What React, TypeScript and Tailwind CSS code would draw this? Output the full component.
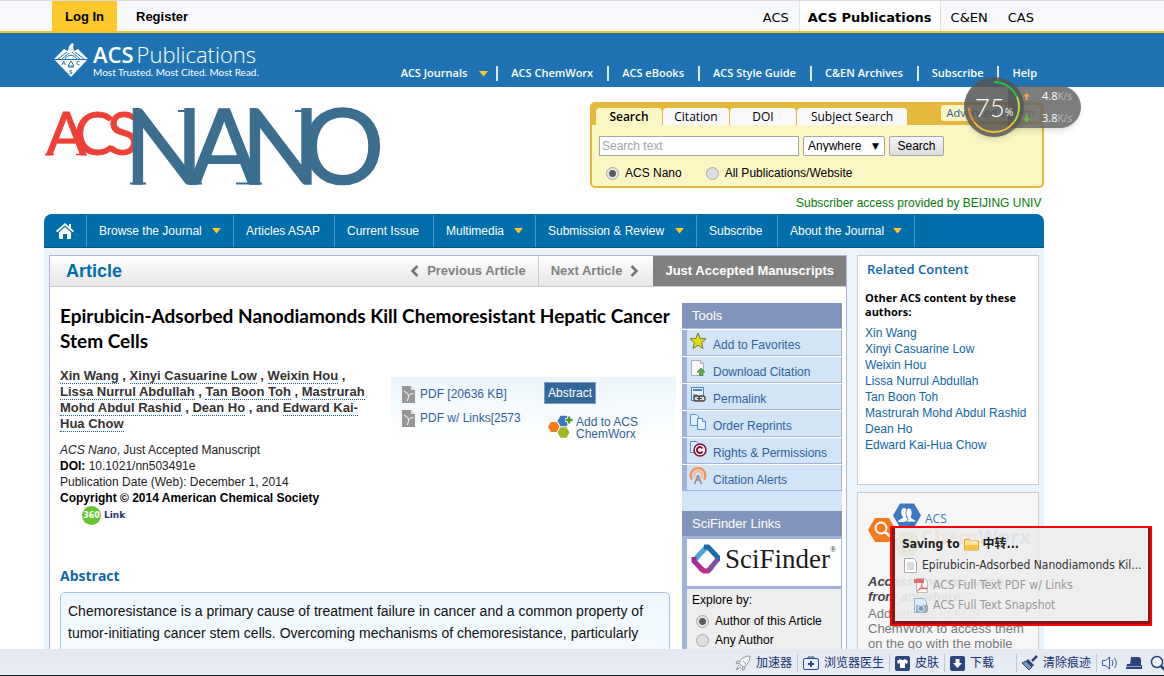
import React from "react";

const hex = (cx: number, cy: number, r: number) => {
  const h = r * 0.866;
  return `${cx - r},${cy} ${cx - r / 2},${cy - h} ${cx + r / 2},${cy - h} ${cx + r},${cy} ${cx + r / 2},${cy + h} ${cx - r / 2},${cy + h}`;
};

const Caret = ({ className = "" }: { className?: string }) => (
  <svg className={className} width="9" height="6" viewBox="0 0 9 6" aria-hidden="true">
    <path d="M0 0h9L4.5 5.5z" fill="#fdc82f" />
  </svg>
);

function TopBar() {
  return (
    <div className="h-[33px] shrink-0 border-t border-b-2 border-t-[#d9dbde] border-b-[#f5c32c] bg-[#f8f9fc] pl-13">
      <div className="flex h-full max-w-[992px] items-stretch text-[13px] text-black">
        <a href="#login" className="flex items-center bg-[#fec72b] px-[13px] pt-1 pb-0.5 font-bold">Log In</a>
        <a href="#register" className="flex items-center px-[19px] pt-1 pb-0.5 font-bold">Register</a>
        <nav className="ml-auto flex items-stretch font-['DejaVu_Sans',sans-serif]">
          <a href="#acs" className="flex items-center px-2.5 pt-1">ACS</a>
          <a href="#pubs" className="flex items-center border-x border-[#dfe1e5] bg-white px-2 pt-1 font-bold">ACS Publications</a>
          <a href="#cen" className="flex items-center px-2.5 pt-1">C&amp;EN</a>
          <a href="#cas" className="flex items-center px-2.5 pt-1">CAS</a>
        </nav>
      </div>
    </div>
  );
}

function AcsEmblem() {
  return (
    <svg width="36" height="36" viewBox="0 0 36 36" className="shrink-0" aria-hidden="true">
      <path d="M1 17 11 7l4 2 1-5 3-3 2 1-1 3 1 4 4-2 10 10-17 18z" fill="#fff" />
      <path d="M5 17 14 10M9 17l7-6M27 17l-8-7M31 17l-9-7M1 17.5h34M12 17c3-5 9-5 12 0" stroke="#1f73b3" strokeWidth="1" fill="none" />
      <path d="m18 19-3 5h6zM15 25h6" stroke="#1f73b3" strokeWidth="1" fill="none" />
      <text x="8.5" y="23" fontSize="6" fontWeight="700" fill="#1f73b3">A</text>
      <text x="23" y="23" fontSize="6" fontWeight="700" fill="#1f73b3">C</text>
      <text x="16" y="32" fontSize="6" fontWeight="700" fill="#1f73b3">S</text>
    </svg>
  );
}

const headerLinks = ["ACS Journals", "ACS ChemWorx", "ACS eBooks", "ACS Style Guide", "C&EN Archives", "Subscribe", "Help"];

function Header() {
  return (
    <header className="h-[54px] shrink-0 bg-[#1f73b3] pl-[53px] text-white">
      <div className="flex h-full max-w-[984px] justify-between font-['Open_Sans',sans-serif]">
        <a href="#home" className="flex items-start gap-1 pt-[9px]">
          <AcsEmblem />
          <span className="block">
            <span className="block text-[22px] leading-[24px]"><span className="font-semibold">ACS</span><span className="ml-[3px] font-light">Publications</span></span>
            <span className="block font-['Lato',sans-serif] text-[10px] leading-[12px]">Most Trusted. Most Cited. Most Read.</span>
          </span>
        </a>
        <nav className="flex items-end pb-1.5 text-[11px] font-semibold">
          {headerLinks.map((l, i) => (
            <span key={l} className="flex h-[15px] items-center">
              {i > 0 && <span className="mr-[13px] ml-3.5 h-[15px] w-0.5 bg-white/85" />}
              <a href="#nav">{l}</a>
              {i === 0 && <Caret className="ml-3 -mr-1.5" />}
            </span>
          ))}
        </nav>
      </div>
    </header>
  );
}

function NanoLogo() {
  return (
    <svg width="340" height="84" viewBox="0 0 340 84" role="img" aria-label="ACS Nano" fontFamily="Lato, sans-serif">
      <text x="2 30 63" y="49" fontSize="60" fill="#ee4036" stroke="#ee4036" strokeWidth=".8">ACS</text>
      <text x="80 145 197 257" y="78" fontSize="104" fill="#3b6e8f" stroke="#3b6e8f" strokeWidth="1.500">NANO</text>
      <path d="M134 5h16M86 77.500h16M251 5h15M145 77.500h13M192 77.500h26" stroke="#3b6e8f" strokeWidth="2" />
      <path d="M1 48.500h9M32 48.500h10" stroke="#ee4036" strokeWidth="1.500" />
    </svg>
  );
}

const radioCls =
  "size-[13px] shrink-0 appearance-none rounded-full border border-[#a9a9a9] bg-[#dedede] checked:bg-[radial-gradient(circle,#5a5a5a_0,#5a5a5a_3px,#e6e6e6_4px)]";

function SearchPanel() {
  const tab = "flex h-[17px] items-center justify-center rounded-t-[4px] bg-[#f9f9f9]";
  return (
    <form className="w-[454px] rounded-[5px] border-2 border-[#e5b93d] bg-[#fbf7c4]" onSubmit={(e) => e.preventDefault()}>
      <div className="flex h-[21px] items-end gap-px bg-[#e5b93d] pl-1 font-['Open_Sans',sans-serif] text-[12px] text-black">
        <button type="button" className="flex h-[17px] w-[66px] items-center justify-center rounded-t-[4px] bg-[#fbf7c4] font-semibold">Search</button>
        <button type="button" className={`${tab} w-[66px]`}>Citation</button>
        <button type="button" className={`${tab} w-[66px]`}>DOI</button>
        <button type="button" className={`${tab} w-[110px]`}>Subject Search</button>
        <a href="#adv" className="mr-0.5 mb-1 ml-auto flex h-4 w-[99px] items-center justify-center rounded-[3px] bg-[#fbf7c4] text-[11px] text-[#2c5d94]">Advanced Search</a>
      </div>
      <div className="flex gap-1 px-[7px] pt-[11px] text-[12px]">
        <input type="text" aria-label="Search text" placeholder="Search text" className="h-5 w-[200px] border border-[#a5a5a5] bg-white px-0.5 placeholder:text-[#a5a5a5]" />
        <span className="relative">
          <select aria-label="Search in" className="h-5 w-[82px] appearance-none rounded-[2px] border border-[#a5a5a5] bg-white px-1 leading-none">
            <option>Anywhere</option>
          </select>
          <span className="pointer-events-none absolute top-1 right-1.5 font-['DejaVu_Sans',sans-serif] text-[9px] leading-[12px]">▼</span>
        </span>
        <button className="h-5 w-[55px] rounded-[2px] border border-[#a5a5a5] bg-linear-to-b from-[#f5f5f5] to-[#dcdcdc]">Search</button>
      </div>
      <div className="flex items-center px-3.5 pt-[9px] pb-[5px] text-[12px] leading-[16px]">
        <label className="flex items-center gap-1.5"><input type="radio" name="scope" defaultChecked className={radioCls} />ACS Nano</label>
        <label className="ml-6 flex items-center gap-1.5"><input type="radio" name="scope" className={radioCls} />All Publications/Website</label>
      </div>
    </form>
  );
}

function MainNav() {
  const item = "flex items-center border-r border-[#4398c6] pl-3";
  return (
    <nav className="flex h-[34px] items-stretch rounded-t-[8px] border-b border-[#045585] bg-[#006eab] pt-px text-[12px] text-white">
      <a href="#home" aria-label="Home" className="flex w-[43px] items-center justify-center border-r border-[#4398c6]">
        <svg width="18" height="16" viewBox="0 0 18 16" fill="#fff" aria-hidden="true">
          <path d="M9 0 0 8l1.200 1.200L9 2.500l7.800 6.700L18 8l-3-2.700V1h-2v2.500z" />
          <path d="M9 4 3 9.200V15q0 1 1 1h3v-5h4v5h3q1 0 1-1V9.200z" />
        </svg>
      </a>
      <a href="#b" className={`${item} w-[147px]`}>Browse the Journal<Caret className="ml-auto mr-3" /></a>
      <a href="#a" className={`${item} w-[101px]`}>Articles ASAP</a>
      <a href="#c" className={`${item} w-[99px]`}>Current Issue</a>
      <a href="#m" className={`${item} w-[102px]`}>Multimedia<Caret className="ml-auto mr-3" /></a>
      <a href="#s" className={`${item} w-[161px]`}>Submission &amp; Review<Caret className="ml-auto mr-3" /></a>
      <a href="#u" className={`${item} w-[81px]`}>Subscribe</a>
      <a href="#j" className={`${item} w-[137px]`}>About the Journal<Caret className="ml-auto mr-3" /></a>
    </nav>
  );
}

const Chevron = ({ right = false }: { right?: boolean }) => (
  <svg width="9" height="12" viewBox="0 0 9 12" fill="none" stroke="#747474" strokeWidth="2.500" aria-hidden="true">
    <path d={right ? "M1.500 1 6.500 6l-5 5" : "M7.500 1 2.500 6l5 5"} />
  </svg>
);

const PdfIcon = () => (
  <svg width="13" height="17" viewBox="0 0 13 17" aria-hidden="true">
    <path d="M0 0h9l4 4v13H0z" fill="#979797" />
    <path d="M9 0v4h4z" fill="#e6e6e6" />
    <path d="M2 5.500C5 6 6 8 6.500 9.500 8 8 10 7.500 11.500 7.500M6.500 9.500C6.500 12 6 14 5 15" stroke="#fff" fill="none" />
  </svg>
);

const ChemIcon = () => (
  <svg width="25" height="24" viewBox="0 0 25 24" className="shrink-0" aria-hidden="true">
    <polygon points={hex(5.8, 12, 5.8)} fill="#f47b20" />
    <polygon points={hex(15.500, 6, 6)} fill="#3b78c3" />
    <polygon points={hex(15.500, 17.500, 6)} fill="#9fb52a" />
    <path d="M21 1v8M17 5h8" stroke="#fff" strokeWidth="4" />
    <path d="M21 1.500v7M17.500 5h7" stroke="#4c9a2a" strokeWidth="2.500" />
  </svg>
);

const toolIcons = [
  <svg key="0" width="18" height="18" viewBox="0 0 18 18"><path d="m9 1 2.200 5.500 5.800.3-4.500 3.800L14 16.500 9 13.200 4 16.500l1.500-5.900L1 6.800l5.800-.3z" fill="#e3dc10" stroke="#77753c" /></svg>,
  <svg key="1" width="18" height="18" viewBox="0 0 18 18"><path d="M2.500 1.500h9l3 3v12h-12z" fill="#fafafa" stroke="#a9aeb2" /><path d="M11.500 1.500v3h3" fill="none" stroke="#a9aeb2" /><path d="m12 9 4 4h-2.500v3.500h-3V13H8z" fill="#4fae49" stroke="#2f7d2e" strokeWidth=".6" /></svg>,
  <svg key="2" width="18" height="18" viewBox="0 0 18 18"><path d="M2.500 1.500h12v13h-12z" fill="#eaf3ff" stroke="#4a82c4" /><path d="M4 4h9" stroke="#4a82c4" strokeWidth="2" /><path d="M4 8h4v4H4z" fill="#6e9fd8" /><rect x="5" y="10" width="6" height="5" rx="2" fill="#ddd" stroke="#444" strokeWidth="1.300" /><rect x="10" y="10" width="6" height="5" rx="2" fill="#ddd" stroke="#444" strokeWidth="1.300" /><path d="M8 12.500h5" stroke="#444" /></svg>,
  <svg key="3" width="18" height="18" viewBox="0 0 18 18" fill="#e3effc" stroke="#5a8fd0"><path d="M1.500 1.500h6l2 2v9h-8z" /><path d="M8.500 5.500h5l3 3v8h-8z" /><path d="M13.500 5.500v3h3" /></svg>,
  <svg key="4" width="18" height="18" viewBox="0 0 18 18" fill="#e3effc" stroke="#5a8fd0"><path d="M1.500 1.500h6l2 2v9h-8z" /><circle cx="11" cy="10" r="6" fill="#f7eef0" stroke="#7b1230" strokeWidth="1.500" /><path d="M13.500 8.500a3 3 0 1 0 0 3" fill="none" stroke="#7b1230" strokeWidth="1.800" /></svg>,
  <svg key="5" width="18" height="18" viewBox="0 0 18 18" fill="none"><path d="M3 12.500a7.300 7.300 0 1 1 12 0" stroke="#f4935a" strokeWidth="2.500" /><path d="M6 10.500a3.800 3.800 0 1 1 6 0" stroke="#f7b48c" strokeWidth="1.800" /><path d="m9 8-3.500 9M9 8l3.500 9M7 13h4" stroke="#8d8d8d" strokeWidth="1.400" /></svg>,
];
const toolNames = ["Add to Favorites", "Download Citation", "Permalink", "Order Reprints", "Rights & Permissions", "Citation Alerts"];

function ToolsColumn() {
  return (
    <aside className="w-40 shrink-0 self-stretch bg-[#d1e5f6]">
      <h2 className="h-[26px] border-b border-[#a9b8de] bg-[#8194b9] pl-2.5 text-[13px] leading-[25px] text-white">Tools</h2>
      <ul>
        {toolNames.map((n, i) => (
          <li key={n} className="border-t border-white">
            <a href="#tool" className="flex h-[26px] items-center gap-1.5 border-r border-b border-l-5 border-[#a3b2dc] pl-0.5 text-[12px] text-[#33619c]">
              <span className="-mt-1">{toolIcons[i]}</span>
              <span className="pt-1">{n}</span>
            </a>
          </li>
        ))}
      </ul>
      <h2 className="mt-5 h-[25px] bg-[#8194b9] pl-2.5 text-[13px] leading-[25px] text-white">SciFinder Links</h2>
      <div className="h-full border-r border-l-5 border-[#a3b2dc] bg-[#eee]">
        <div className="flex h-[53px] items-center gap-1 border-y-3 border-[#a3b2dc] bg-white pb-2 pl-1">
          <svg width="30" height="30" viewBox="0 0 30 30" fill="none" strokeWidth="5" className="shrink-0" aria-hidden="true">
            <path d="M3.500 16 15 3.500" stroke="#4ba6dc" /><path d="M13 3h4l9.500 10v4" stroke="#1c6cab" />
            <path d="M3 13v4l9 9.500" stroke="#a62c8f" /><path d="m9 24 4 3h4l4-4" stroke="#c9288d" /><path d="m17 27 10-12" stroke="#7e4d9e" />
          </svg>
          <span className="font-['Liberation_Serif',serif] text-[27px] leading-[30px] text-[#1b1b1b]">SciFinder<sup className="-top-4 text-[8px]">®</sup></span>
        </div>
        <div className="flex flex-col pl-[5px] text-[12px] leading-[19px]">
          <span className="pt-0.5">Explore by:</span>
          <label className="flex items-center gap-1.5 pt-0.5 pl-1"><input type="radio" name="explore" defaultChecked className={radioCls} />Author of this Article</label>
          <label className="flex items-center gap-1.5 pl-1"><input type="radio" name="explore" className={radioCls} />Any Author</label>
        </div>
      </div>
    </aside>
  );
}

const Author = ({ children }: { children: React.ReactNode }) => (
  <a href="#author" className="border-b border-dotted border-[#1f5f9b]">{children}</a>
);

function Article() {
  return (
    <main className="min-w-0 flex-1 border border-[#b3b3dc] bg-white">
      <div className="flex h-[31px] items-stretch border-b border-[#ccc] bg-linear-to-b from-white to-[#e6e6e6] text-[13px] font-bold text-[#808080]">
        <h2 className="flex items-center pl-4 text-[18px] text-[#0070ab]">Article</h2>
        <a href="#prev" className="ml-auto flex items-center gap-2 pr-3"><Chevron />Previous Article</a>
        <a href="#next" className="flex items-center gap-2 border-l border-[#ccc] pr-3.5 pl-3">Next Article<Chevron right /></a>
        <a href="#just" className="flex items-center bg-[#808080] px-3 text-white">Just Accepted Manuscripts</a>
      </div>
      <div className="flex pt-4 pr-1 pl-2.5">
        <div className="min-w-0 flex-1">
          <h1 className="font-['Lato',sans-serif] text-[19px] leading-[25px] font-bold text-black">Epirubicin-Adsorbed Nanodiamonds Kill Chemoresistant Hepatic Cancer Stem Cells</h1>
          <div className="mt-[15px] flex items-start">
            <div className="w-[331px] shrink-0">
              <p className="text-[13px] leading-[16px] font-bold text-[#333]">
                <Author>Xin Wang</Author> , <Author>Xinyi Casuarine Low</Author> , <Author>Weixin Hou</Author> ,<br />
                <Author>Lissa Nurrul Abdullah</Author> , <Author>Tan Boon Toh</Author> , <Author>Mastrurah<br />Mohd Abdul Rashid</Author> , <Author>Dean Ho</Author> , and <Author>Edward Kai-<br />Hua Chow</Author>
              </p>
              <p className="mt-2.5 text-[12px] leading-[16px] text-[#222]">
                <i>ACS Nano</i>, Just Accepted Manuscript<br />
                <b className="text-black">DOI:</b> 10.1021/nn503491e<br />
                Publication Date (Web): December 1, 2014<br />
                <b className="text-black">Copyright © 2014 American Chemical Society</b>
              </p>
              <a href="#link" className="flex items-center gap-[3px] pl-[22px] font-['DejaVu_Sans',sans-serif] text-[9px] font-bold text-[#28306e]">
                <span className="flex size-[19px] items-center justify-center rounded-full bg-[#65c52f] text-[8px] text-white">360</span>Link
              </a>
            </div>
            <div className="mt-[9px] mr-1.5 flex h-[66px] flex-1 bg-linear-to-b from-[#edf6fb] to-white pl-[11px] text-[12px] text-[#33619c]">
              <div className="flex w-[142px] flex-col gap-1.5 pt-2 whitespace-nowrap">
                <a href="#pdf" className="flex items-center gap-[5px]"><PdfIcon />PDF [20636 KB]</a>
                <a href="#pdf2" className="flex items-center gap-[5px]"><PdfIcon />PDF w/ Links[2573</a>
              </div>
              <div className="pt-[5px]">
                <button className="h-[22px] border border-[#7d9dc5] bg-[#336799] px-[3px] text-white">Abstract</button>
                <a href="#add" className="mt-[11px] flex items-start gap-[3px] pl-1 leading-[12px]"><ChemIcon /><span className="pt-px">Add to ACS<br />ChemWorx</span></a>
              </div>
            </div>
          </div>
          <h2 className="mt-[41px] font-['Open_Sans',sans-serif] text-[14px] leading-[20px] font-bold text-[#1166a8]">Abstract</h2>
          <div className="mt-1.5 mr-3 rounded-t-[5px] border border-[#a9c4e0] bg-linear-to-b from-[#eef7fc] to-white px-[7px] pt-[7px] pb-24 text-[14px] leading-[22px] text-[#111]">
            Chemoresistance is a primary cause of treatment failure in cancer and a common property of tumor-initiating cancer stem cells. Overcoming mechanisms of chemoresistance, particularly
          </div>
        </div>
        <ToolsColumn />
      </div>
    </main>
  );
}

const related = ["Xin Wang", "Xinyi Casuarine Low", "Weixin Hou", "Lissa Nurrul Abdullah", "Tan Boon Toh", "Mastrurah Mohd Abdul Rashid", "Dean Ho", "Edward Kai-Hua Chow"];

function Sidebar() {
  return (
    <aside className="flex w-[182px] shrink-0 flex-col gap-[7px]">
      <section className="h-[230px] border border-[#ccc] bg-white px-[7px] pt-[3px]">
        <h2 className="pl-0.5 font-['Open_Sans',sans-serif] text-[13px] leading-[20px] font-semibold text-[#1166a8]">Related Content</h2>
        <h3 className="mt-3 font-['Open_Sans',sans-serif] text-[11px] leading-[14px] font-bold text-black">Other ACS content by these authors:</h3>
        <ul className="mt-1.5 text-[12px] leading-[16px] whitespace-nowrap text-[#1166a8]">
          {related.map((r) => <li key={r}><a href="#r">{r}</a></li>)}
        </ul>
      </section>
      <section className="border border-[#ccc] bg-[#f7f7f7] px-2.5 pt-2.5 pb-10 text-[13px] leading-[15px] text-[#777]">
        <div className="flex">
          <svg width="53" height="56" viewBox="0 0 53 56" className="shrink-0" aria-hidden="true">
            <polygon points={hex(14, 27, 14)} fill="#f47b20" />
            <circle cx="13" cy="25" r="5.500" fill="none" stroke="#fff" strokeWidth="2" /><path d="m17 29 6 5" stroke="#fff" strokeWidth="2.500" />
            <polygon points={hex(39, 12.500, 14)} fill="#3b78c3" />
            <path d="M30 19c0-3 5-3 5-5-3-3-2-9 1-9s4 5 2 9c1 2 6 2 6 5z" fill="#fff" />
            <path d="M37 19c4 0 3-4 2-5-2-4-1-9 2-9s4 6 2 9c0 2 5 2 5 5z" fill="#fff" stroke="#3b78c3" strokeWidth=".8" />
            <polygon points={hex(39, 41, 14)} fill="#9fb52a" />
          </svg>
          <div className="pt-2 font-['Open_Sans',sans-serif]">
            <span className="block pl-1 text-[12px] text-[#3b78c3]">ACS</span>
            <span className="block text-[20px] leading-[22px] font-bold text-[#f47b20]">Chem<span className="text-[#3b78c3]">Worx</span></span>
          </div>
        </div>
        <p className="mt-[15px] font-bold text-[#444] italic">Access your research<br />from anywhere.</p>
        <p className="mt-0.5 whitespace-nowrap">Add articles to ACS<br />ChemWorx to access them<br />on the go with the mobile</p>
      </section>
    </aside>
  );
}

const Arrow = ({ color, down = false }: { color: string; down?: boolean }) => (
  <svg width="7" height="7" viewBox="0 0 7 7" className="shrink-0" aria-hidden="true">
    <path d={down ? "M3.500 7 0 3.500h2.500V0h2v3.500H7z" : "M3.500 0 0 3.500h2.500V7h2V3.500H7z"} fill={color} />
  </svg>
);

function SpeedWidget() {
  return (
    <div className="absolute top-[77px] right-[83px] flex items-center font-['Open_Sans',sans-serif] text-white">
      <div className="relative z-10 flex size-[60px] items-center justify-center rounded-full bg-[#555]/85 shadow-md">
        <svg className="absolute inset-0" width="60" height="60" viewBox="0 0 60 60" fill="none" strokeWidth="2" aria-hidden="true">
          <path d="M30 5a25 25 0 0 1 23 15" stroke="#2fbf45" /><path d="M53 20a25 25 0 0 1-3 25" stroke="#a8d93f" />
          <path d="M50 45a25 25 0 0 1-40 0" stroke="#f3c12f" /><path d="M10 45a25 25 0 0 1-5-14" stroke="#f28b2c" />
        </svg>
        <span className="font-['Lato',sans-serif] text-[26px] font-light">75</span><span className="pt-2.5 text-[10px]">%</span>
      </div>
      <div className="-ml-4 flex h-[42px] w-[73px] flex-col justify-center rounded-r-full bg-[#666]/85 pl-[15px] text-[11px] leading-[21px] shadow-md">
        <span className="flex items-center whitespace-nowrap"><Arrow color="#f5a64a" /><span className="ml-3">4.8<span className="text-[10px] text-[#bbb]">K/s</span></span></span>
        <span className="flex items-center whitespace-nowrap"><Arrow color="#66c83c" down /><span className="ml-3">3.8<span className="text-[10px] text-[#bbb]">K/s</span></span></span>
      </div>
    </div>
  );
}

function SavePopup() {
  return (
    <div className="absolute right-3 bottom-[50px] w-[262px] border-2 border-[#f00] font-['DejaVu_Sans_Condensed','Noto_Sans_CJK_SC',sans-serif] text-[12px] whitespace-nowrap">
      <div className="h-24 border-r-2 border-b-3 border-l-3 border-[#8a1618] bg-[#ededed]/92 pt-[7px] pl-[7px]">
        <div className="flex h-[18px] items-center gap-1 font-bold text-[#222]">
          Saving to
          <svg width="15" height="13" viewBox="0 0 15 13" aria-hidden="true"><path d="M.5 1.500h5l1 1.500h8v9H.5z" fill="#fbe48b" stroke="#d9a63a" /><path d="M1 7h13v5H1z" fill="#f3c341" /><path d="M7 4h6" stroke="#fff" /></svg>
          中转...
        </div>
        <div className="mt-0.5 flex h-5 items-center gap-[5px] pl-0.5 text-[#333]">
          <svg width="13" height="15" viewBox="0 0 13 15" className="shrink-0" aria-hidden="true"><path d="M.5.5h9l3 3v11H.5z" fill="#fff" stroke="#aaa" /><path d="M3 5h7M3 7h7M3 9h7M3 11h7" stroke="#bbb" /></svg>
          Epirubicin-Adsorbed Nanodiamonds Kil...
        </div>
        <div className="flex h-5 items-center gap-1 pl-3 text-[#999]">
          <svg width="15" height="15" viewBox="0 0 15 15" className="shrink-0" aria-hidden="true"><path d="M2.500.5h8l3 3v11h-11z" fill="#f7f7f7" stroke="#bbb" /><path d="M0 1h10v4H0z" fill="#e76a6a" /><path d="M3 13C8 10 8 7 8 4M7 7c1 3 4 4 6 4M5 11l8-1" stroke="#d55" fill="none" /></svg>
          ACS Full Text PDF w/ Links
        </div>
        <div className="flex h-5 items-center gap-1 pl-3 text-[#999]">
          <svg width="15" height="15" viewBox="0 0 15 15" className="shrink-0" aria-hidden="true"><path d="M.5.5h9l3 3v11H.5z" fill="#dcebf7" stroke="#8ab4d8" /><path d="M2 7h12v7H2z" fill="#aaa" /><circle cx="7" cy="10.500" r="3" fill="#5aa5d8" stroke="#eee" /></svg>
          ACS Full Text Snapshot
        </div>
      </div>
    </div>
  );
}

const Sep = () => <span className="mx-[5px] h-[18px] w-px bg-[#c3c9d6]" />;

function StatusBar() {
  const b = "flex h-full items-center gap-[5px]";
  return (
    <footer className="flex h-[27px] shrink-0 items-center justify-end overflow-hidden border-b border-[#18202e] bg-linear-to-b from-[#e3e8f2] to-[#e9edf5] pt-0.5 font-['Liberation_Sans','Noto_Sans_CJK_SC',sans-serif] text-[12px] whitespace-nowrap text-[#16326e]">
      <button className={b}>
        <svg width="16" height="16" viewBox="0 0 16 16" fill="#f1f1f1" stroke="#999" aria-hidden="true"><path d="M15 1C9 1 6 4 4 8l4 4c4-2 7-5 7-11zM5 6H2L1 9l3-1M10 11v3l-3 1 1-3M4 10l-3 5 5-3M8 6l3 3" /></svg>加速器
      </button>
      <Sep />
      <button className={b}>
        <svg width="16" height="14" viewBox="0 0 16 14" aria-hidden="true"><path d="M5 3V1h6v2" fill="none" stroke="#2b4a8b" /><rect x=".5" y="2.500" width="15" height="11" rx="1.500" fill="#e8effa" stroke="#2b4a8b" /><path d="M8 5v6M5 8h6" stroke="#2b4a8b" strokeWidth="2" /></svg>浏览器医生
      </button>
      <Sep />
      <button className={b}>
        <svg width="15" height="15" viewBox="0 0 15 15" aria-hidden="true"><rect width="15" height="15" rx="2" fill="#2c457f" /><path d="m5 3-3 2 1 3 2-1v5h5V7l2 1 1-3-3-2q-2.500 2-5 0z" fill="#fff" /></svg>皮肤
      </button>
      <Sep />
      <button className={b}>
        <svg width="15" height="15" viewBox="0 0 15 15" aria-hidden="true"><rect width="15" height="15" rx="2" fill="#2c457f" /><path d="M5.500 3h4v4H12l-4.500 5L3 7h2.500z" fill="#fff" /></svg>下载
      </button>
      <span className="w-[17px]" />
      <Sep />
      <button className={b}>
        <svg width="16" height="16" viewBox="0 0 16 16" aria-hidden="true"><path d="m15 1-5 5" stroke="#2c457f" strokeWidth="2.500" /><path d="m6 4 6 6-2 2-6-6z" fill="#2c457f" /><path d="M4 6 0 8l7 7 3-3z" fill="#7f93bd" stroke="#2c457f" /></svg>清除痕迹
      </button>
      <Sep />
      <button aria-label="Sound" className="mr-2">
        <svg width="16" height="14" viewBox="0 0 16 14" fill="none" stroke="#3a5a99" aria-hidden="true"><path d="M.5 4.500h3l4-3.500v12l-4-3.500h-3zM10 4q2 3 0 6M12.500 2q3.500 5 0 10" /></svg>
      </button>
      <button aria-label="Mode" className="mr-2">
        <svg width="16" height="12" viewBox="0 0 16 12" fill="#2c457f" aria-hidden="true"><path d="M5 0h7q3 0 3 3v5H4z" /><path d="M1 7h3l1 1h11v4H0z" /><path d="M1 9.500h14" stroke="#8fa3cb" /></svg>
      </button>
      <button aria-label="Zoom" className="-mr-1">
        <svg width="18" height="17" viewBox="0 0 18 17" fill="#f4f8ff" stroke="#2c457f" aria-hidden="true"><circle cx="7" cy="7" r="5.500" strokeWidth="1.500" /><path d="m11 11 5 5" strokeWidth="3" /></svg>
      </button>
    </footer>
  );
}

export default function App() {
  return (
    <div className="relative flex h-screen flex-col overflow-hidden bg-white font-['Liberation_Sans',Arial,sans-serif] text-black">
      <TopBar />
      <Header />
      <div className="min-h-0 flex-1 overflow-hidden pl-11">
        <div className="w-full max-w-[1000px]">
          <div className="flex h-[127px] items-start justify-between pt-[15px]">
            <a href="#nano" className="pt-1"><NanoLogo /></a>
            <div>
              <SearchPanel />
              <p className="ml-auto w-62 overflow-hidden pt-1.5 text-[12px] leading-[18px] whitespace-nowrap text-[#0a7a0a]">Subscriber access provided by BEIJING UNIV</p>
            </div>
          </div>
          <MainNav />
          <div className="flex gap-2.5 bg-[#ebf3fb] px-[5px] pt-[7px]">
            <Article />
            <Sidebar />
          </div>
        </div>
      </div>
      <StatusBar />
      <SpeedWidget />
      <SavePopup />
    </div>
  );
}
